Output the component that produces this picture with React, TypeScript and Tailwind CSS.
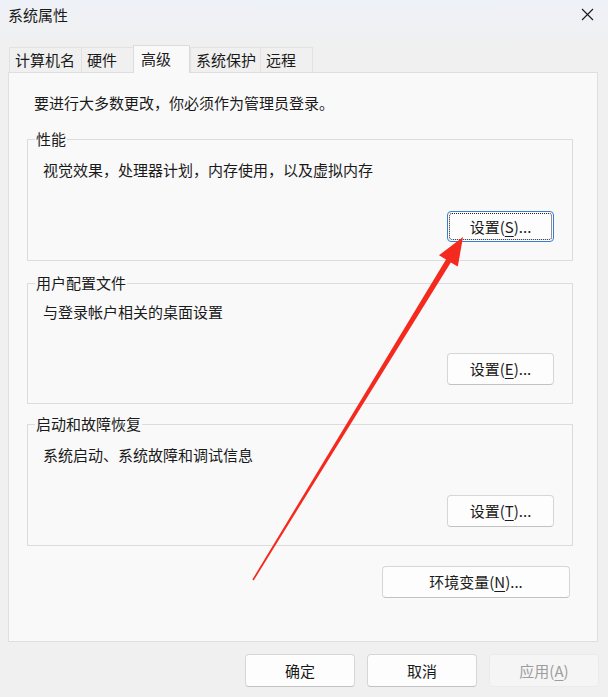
import type { ReactNode } from 'react';

const tabs = [
  { label: '计算机名', w: 'w-[72px]' },
  { label: '硬件', w: 'w-[52px]' },
  { label: '高级', w: 'w-[57px]', active: true },
  { label: '系统保护', w: 'w-[70px]' },
  { label: '远程', w: 'w-[53px]', last: true },
];

function Key({ k }: { k: string }) {
  return <span className="underline underline-offset-[3px] decoration-1">{k}</span>;
}

function Btn({ children, className = '', focused = false, disabled = false }: { children: ReactNode; className?: string; focused?: boolean; disabled?: boolean }) {
  return (
    <button
      type="button"
      className={
        'relative flex items-center justify-center rounded-[4px] border text-[15px] leading-[20px] ' +
        (focused
          ? 'border-[#3a7bd5] bg-[#fdfdfd] text-[#1a1a1a] '
          : disabled
          ? 'border-[#ebebeb] bg-[#f5f5f5] text-[#9d9d9d] '
          : 'border-[#d6d6d6] border-b-[#c2c2c2] bg-[#fdfdfd] text-[#1a1a1a] ') +
        className
      }
    >
      {focused && <span className="absolute inset-[1px] rounded-[3px] border border-dotted border-[#222]" />}
      {children}
    </button>
  );
}

function Group({ title, desc, children, className = '' }: { title: string; desc: string; children: ReactNode; className?: string }) {
  return (
    <div className={'relative ml-[18px] flex w-[546px] flex-col border border-[#dcdcdc] pl-[15px] ' + className}>
      <span className="absolute -top-[11px] left-[7px] bg-[#f9f9f9] px-[1px] leading-[20px]">{title}</span>
      <p className="leading-[20px]">{desc}</p>
      <div className="mt-auto mb-[18px] mr-[18px] self-end">{children}</div>
    </div>
  );
}

export default function App() {
  return (
    <div className="relative h-[697px] w-[608px] overflow-hidden bg-[#f0f0f0] font-['Noto_Sans_CJK_SC','Microsoft_YaHei',sans-serif] text-[15px] text-[#1a1a1a]">
      {/* title bar */}
      <div className="h-[45px] bg-gradient-to-b from-[#eef1f7] to-[#f0f0f0]">
        <div className="flex h-[29px] items-center justify-between pl-[8px] pr-[14px]">
          <span className="leading-[20px]">系统属性</span>
          <svg width="13" height="13" viewBox="0 0 13 13" className="text-[#1a1a1a]">
            <path d="M1 1L12 12M12 1L1 12" stroke="currentColor" strokeWidth="1.1" />
          </svg>
        </div>
      </div>

      {/* tabs */}
      <div className="flex h-[27px] items-end pl-[9px]">
        {tabs.map((t) =>
          t.active ? (
            <div
              key={t.label}
              className={'relative z-10 -mb-px flex h-[28px] items-start border-x border-t border-[#dcdcdc] bg-[#f9f9f9] pl-[7px] pt-[3px] leading-[20px] ' + t.w}
            >
              {t.label}
            </div>
          ) : (
            <div
              key={t.label}
              className={
                'flex h-[25px] items-center border-l border-t border-[#e2e2e2] bg-[#f0f0f0] pl-[5px] leading-[20px] ' +
                (t.last ? 'border-r ' : '') +
                t.w
              }
            >
              {t.label}
            </div>
          )
        )}
      </div>

      {/* panel */}
      <div className="ml-[8px] flex h-[570px] w-[590px] flex-col border border-[#dfdfdf] bg-[#f9f9f9] pt-[20px]">
        <p className="pl-[25px] leading-[20px]">要进行大多数更改，你必须作为管理员登录。</p>

        <Group title="性能" desc="视觉效果，处理器计划，内存使用，以及虚拟内存" className="mt-[26px] h-[122px] pt-[20px]">
          <Btn focused className="h-[31px] w-[107px]">
            设置(<Key k="S" />)...
          </Btn>
        </Group>

        <Group title="用户配置文件" desc="与登录帐户相关的桌面设置" className="mt-[22px] h-[121px] pt-[18px]">
          <Btn className="h-[32px] w-[107px]">
            设置(<Key k="E" />)...
          </Btn>
        </Group>

        <Group title="启动和故障恢复" desc="系统启动、系统故障和调试信息" className="mt-[20px] h-[122px] pt-[20px]">
          <Btn className="h-[32px] w-[107px]">
            设置(<Key k="T" />)...
          </Btn>
        </Group>

        <div className="mt-[20px] mr-[27px] self-end">
          <Btn className="h-[32px] w-[188px]">
            环境变量(<Key k="N" />)...
          </Btn>
        </div>
      </div>

      {/* dialog buttons */}
      <div className="mt-[12px] flex justify-end gap-[12px] pr-[9px]">
        <Btn className="h-[33px] w-[110px]">确定</Btn>
        <Btn className="h-[33px] w-[110px]">取消</Btn>
        <Btn disabled className="h-[33px] w-[110px]">
          应用(<Key k="A" />)
        </Btn>
      </div>

      {/* red annotation arrow */}
      <svg className="pointer-events-none absolute inset-0 z-20" width="608" height="697" viewBox="0 0 608 697">
        <polygon
          points="463,237 457.8,266.6 450.8,262.4 253.7,580.4 252.3,579.6 446,259.4 439,255.2"
          fill="#f52a1e"
        />
      </svg>
    </div>
  );
}
